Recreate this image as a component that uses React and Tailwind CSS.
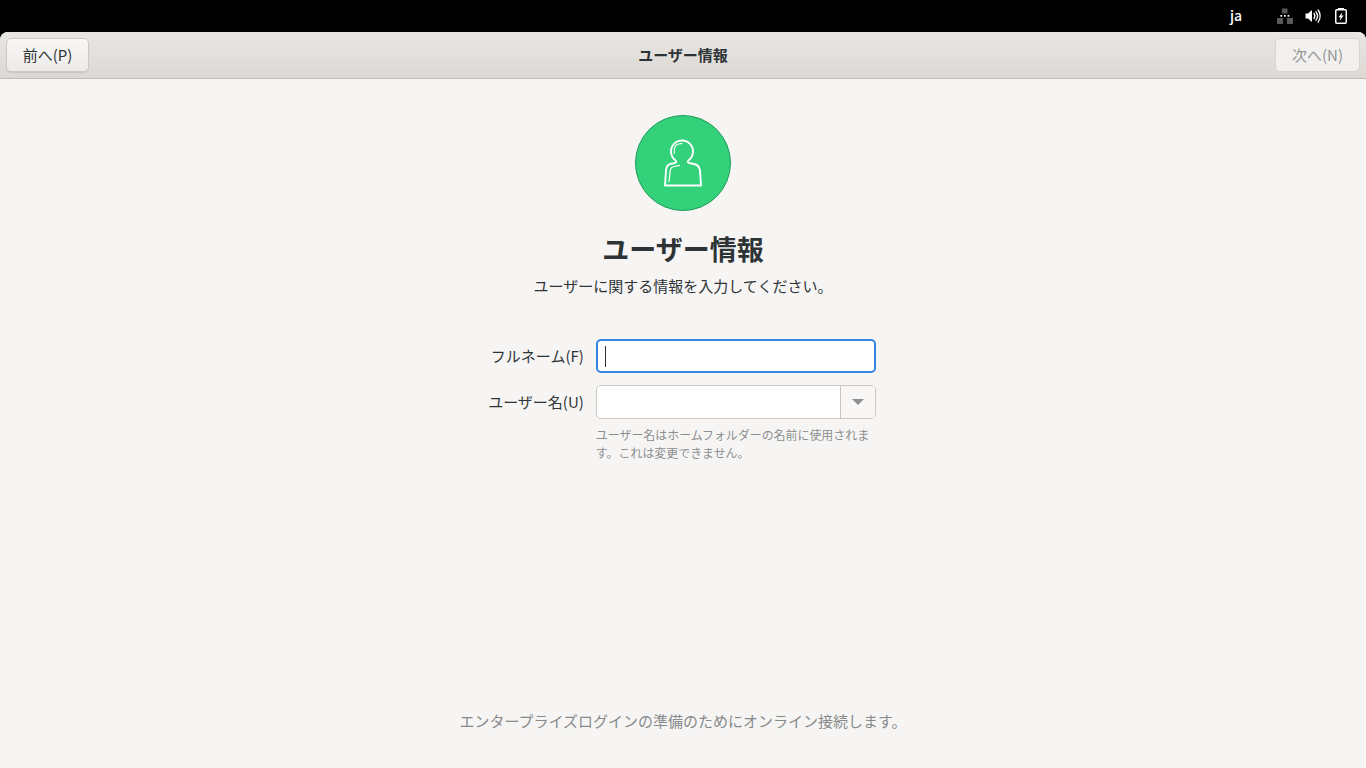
const font = { fontFamily: '"Noto Sans CJK JP", "Noto Sans", sans-serif' };

function NetworkIcon() {
  return (
    <svg width="16" height="16" viewBox="0 0 16 16" className="block" fill="#ffffff">
      <rect x="5" y="0.5" width="5.5" height="5" opacity="0.35" />
      <rect x="0" y="10" width="6" height="6" opacity="0.35" />
      <rect x="10" y="10" width="6" height="6" opacity="0.35" />
      <rect x="3.4" y="7" width="1.7" height="1.7" />
      <rect x="7" y="7" width="1.7" height="1.7" />
      <rect x="10.6" y="7" width="1.7" height="1.7" />
    </svg>
  );
}

function VolumeIcon() {
  return (
    <svg width="16" height="16" viewBox="0 0 16 16" className="block" fill="none">
      <path d="M0.5 5.5H3L7 2V14L3 10.5H0.5Z" fill="#ffffff" />
      <path d="M9 5.5C10 7 10 9 9 10.5" stroke="#ffffff" strokeWidth="1.4" strokeLinecap="round" />
      <path d="M11 3.8C12.8 6.2 12.8 9.8 11 12.2" stroke="#ffffff" strokeWidth="1.4" strokeLinecap="round" />
      <path d="M13.2 2C15.6 5.5 15.6 10.5 13.2 14" stroke="#ffffff" strokeWidth="1.4" strokeLinecap="round" />
    </svg>
  );
}

function BatteryIcon() {
  return (
    <svg width="16" height="16" viewBox="0 0 16 16" className="block" fill="none">
      <path d="M5 0H11V2H5Z" fill="#ffffff" />
      <rect x="2.75" y="1.75" width="10.5" height="13.5" rx="1" stroke="#ffffff" strokeWidth="1.5" />
      <path d="M9.5 4L5.5 9.2H7.6L6.5 13L10.6 7.4H8.4Z" fill="#ffffff" />
    </svg>
  );
}

function UserIcon() {
  return (
    <svg width="96" height="96" viewBox="0 0 96 96" className="block">
      <circle cx="48" cy="48" r="47.5" fill="#33d17a" stroke="#209a5c" strokeWidth="1" />
      <g fill="none" stroke="#ffffff">
        <path
          d="M30 70.5 L31 55.3 Q31.3 50 36 48.7 L39 48.2 Q42.5 47.5 40.5 45.3 A11 11 0 1 1 53.5 45.3 Q51.5 47.5 55 48.2 L58 48.7 Q64 49.5 65 55.3 L66 70.5 Z"
          strokeWidth="1.9"
          strokeLinejoin="round"
        />
        <path d="M34 67 L35.2 56 Q35.7 52 39 51.5 L45 50.3" strokeWidth="1.2" />
        <path d="M39.3 38.7 Q38.8 31.5 41.5 30 Q44 28.2 47.3 28.7" strokeWidth="1.2" />
      </g>
    </svg>
  );
}

export default function App() {
  return (
    <div className="h-screen w-full flex flex-col bg-black overflow-hidden text-[#2e3436]" style={font}>
      <div className="h-8 flex items-center justify-end text-white text-[14px] shrink-0">
        <span className="font-medium mr-[35px] -mt-[1px]">ja</span>
        <div className="flex items-center gap-[12px] mr-[17px]">
          <NetworkIcon />
          <VolumeIcon />
          <BatteryIcon />
        </div>
      </div>
      <div className="flex-1 flex flex-col min-h-0 rounded-t-[8px] overflow-hidden bg-[#f6f5f4]">
        <header className="h-[47px] shrink-0 flex items-center justify-between px-[6px] bg-gradient-to-b from-[#e8e6e3] to-[#dcd9d5] border-b border-[#c0bbb4] relative">
          <button className="w-[83px] h-[34px] rounded-[5px] border border-[#cdc7c2] bg-gradient-to-b from-[#f8f7f6] to-[#edebe9] text-[15px] text-[#2e3436] shadow-[0_1px_1px_rgba(0,0,0,0.1)]">
            前へ(P)
          </button>
          <h1 className="absolute inset-x-0 text-center text-[15px] font-bold pointer-events-none">ユーザー情報</h1>
          <button className="w-[85px] h-[34px] rounded-[5px] border border-[#d9d5d1] bg-[#f2f1ef] text-[15px] text-[#929595]">
            次へ(N)
          </button>
        </header>
        <main className="flex-1 flex flex-col items-center min-h-0">
          <div className="mt-[36px]">
            <UserIcon />
          </div>
          <h2 className="mt-[18px] text-[27px] leading-[40px] font-bold">ユーザー情報</h2>
          <p className="mt-[6px] text-[15px] leading-[22px]">ユーザーに関する情報を入力してください。</p>
          <div className="mt-[42px] ml-[-2px] grid grid-cols-[auto_280px] gap-x-[12px] gap-y-[12px] items-center text-[15px]">
            <label className="text-right">フルネーム(F)</label>
            <div className="h-[34px] rounded-[5px] border-2 border-[#3584e4] bg-white flex items-center pl-[7px]">
              <span className="block w-px h-[21px] bg-[#2e3436]" />
            </div>
            <label className="text-right">ユーザー名(U)</label>
            <div className="h-[34px] rounded-[5px] border border-[#cdc7c2] bg-white flex overflow-hidden">
              <div className="flex-1" />
              <div className="w-[35px] border-l border-[#cdc7c2] bg-[#f8f7f6] flex items-center justify-center">
                <span className="block w-0 h-0 border-x-[6px] border-x-transparent border-t-[6px] border-t-[#8e9192]" />
              </div>
            </div>
            <div />
            <p className="-mt-[5px] text-[11.95px] leading-[17.5px] text-[#8b8e8f]">
              ユーザー名はホームフォルダーの名前に使用されます。これは変更できません。
            </p>
          </div>
          <p className="mt-auto mb-[36px] text-[15px] leading-[22px] text-[#878a8b]">
            エンタープライズログインの準備のためにオンライン接続します。
          </p>
        </main>
      </div>
    </div>
  );
}
